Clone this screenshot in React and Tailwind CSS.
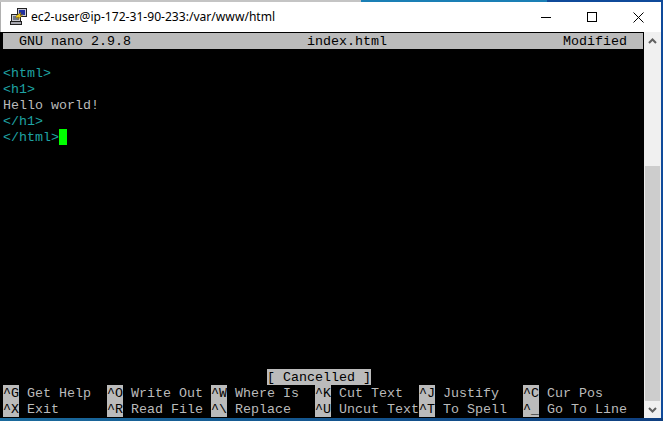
const rows = [
  [["^G", "Get Help"], ["^O", "Write Out"], ["^W", "Where Is"], ["^K", "Cut Text"], ["^J", "Justify"], ["^C", "Cur Pos"]],
  [["^X", "Exit"], ["^R", "Read File"], ["^\\", "Replace"], ["^U", "Uncut Text"], ["^T", "To Spell"], ["^_", "Go To Line"]],
];

const lines = [
  { text: "", color: "" },
  { text: "<html>", color: "text-[#1fa3a3]" },
  { text: "<h1>", color: "text-[#1fa3a3]" },
  { text: "Hello world!", color: "text-[#bbbbbb]" },
  { text: "</h1>", color: "text-[#1fa3a3]" },
  { text: "</html>", color: "text-[#1fa3a3]" },
];

function PuttyIcon() {
  return (
    <svg width="20" height="20" viewBox="0 0 20 20" className="shrink-0">
      {/* back monitor */}
      <rect x="9.5" y="1.5" width="9" height="8" fill="#c8c8d8" stroke="#222" />
      <rect x="11" y="3" width="6" height="5" fill="#2030a0" />
      {/* front monitor */}
      <rect x="3.5" y="7.5" width="9" height="7" fill="#c8c8d0" stroke="#222" />
      <rect x="5" y="9" width="6" height="4" fill="#707888" />
      <rect x="2.5" y="14.5" width="11" height="3" fill="#a8a8b0" stroke="#222" />
      {/* bolt */}
      <path d="M8 9 L13 5.5 L12 8.5 L15 7.5 L10 12.5 L11 10 L8 11 Z" fill="#f5d020" stroke="#7a5a00" strokeWidth="0.5" />
    </svg>
  );
}

function Shortcut({ shortcut, label, width }) {
  return (
    <div className={`flex ${width}`}>
      <span className="bg-[#bbbbbb] text-[#000000] whitespace-pre">{shortcut}</span>
      <span className="text-[#bbbbbb] whitespace-pre"> {label}</span>
    </div>
  );
}

export default function App() {
  const widths = ["w-[104px]", "w-[104px]", "w-[104px]", "w-[104px]", "w-[104px]", "w-[120px]"];

  return (
    <div className="w-[663px] h-[421px] flex flex-col overflow-hidden bg-white">
      <div className="h-[2px] flex">
        <div className="w-[361px] bg-[#c4c4c4]"></div>
        <div className="w-[186px] bg-[#1a7fb5]"></div>
        <div className="flex-1 bg-[#0f4a9a]"></div>
      </div>

      <div className="flex-1 flex min-h-0">
        <div className="w-[661px] flex flex-col">
          <div className="h-[30px] flex items-center bg-white pl-[7px] border-l border-[#b0b0b0]">
            <PuttyIcon />
            <span className="ml-[3px] text-[12.1px] text-black font-['Noto_Sans','Open_Sans',sans-serif]">ec2-user@ip-172-31-90-233:/var/www/html</span>
            <div className="ml-auto flex items-center text-black">
              <div className="w-[46px] h-[30px] flex items-center justify-center">
                <div className="w-[10px] h-px bg-black"></div>
              </div>
              <div className="w-[46px] h-[30px] flex items-center justify-center">
                <div className="w-[10px] h-[10px] border border-black"></div>
              </div>
              <div className="w-[46px] h-[30px] flex items-center justify-center">
                <svg width="11" height="11" viewBox="0 0 11 11">
                  <path d="M0.5 0.5 L10.5 10.5 M10.5 0.5 L0.5 10.5" stroke="#000" strokeWidth="1" fill="none" />
                </svg>
              </div>
            </div>
          </div>

          <div className="flex-1 flex min-h-0">
            <div className="w-[644px] bg-black pl-[3px] pt-px font-['Liberation_Mono',monospace] text-[13.33px] leading-[18px]">
              <div className="w-[640px] h-4 flex bg-[#bbbbbb] text-[#000000] whitespace-pre">
                <span className="w-[304px]">  GNU nano 2.9.8</span>
                <span className="w-[216px]">index.html</span>
                <span className="flex-1 text-right">Modified  </span>
              </div>
              <div className="h-[320px]">
                {lines.map((line, i) => (
                  <div key={i} className={`h-4 flex whitespace-pre ${line.color}`}>
                    {line.text}
                    {i === 5 && <span className="w-2 h-4 bg-[#00ff00]"></span>}
                  </div>
                ))}
              </div>
              <div className="h-4 flex pl-[264px]">
                <span className="bg-[#bbbbbb] text-[#000000] whitespace-pre">[ Cancelled ]</span>
              </div>
              {rows.map((row, i) => (
                <div key={i} className="h-4 flex">
                  {row.map((item, j) => (
                    <Shortcut key={item[0]} shortcut={item[0]} label={item[1]} width={widths[j]} />
                  ))}
                </div>
              ))}
            </div>

            <div className="w-[17px] bg-[#f0f0f0] flex flex-col">
              <div className="h-[17px] flex items-center justify-center">
                <svg width="9" height="6" viewBox="0 0 9 6"><path d="M1 5 L4.5 1.5 L8 5" stroke="#606060" strokeWidth="2" fill="none" /></svg>
              </div>
              <div className="flex-1 flex flex-col">
                <div className="h-[117px]"></div>
                <div className="flex-1 mx-px bg-[#cdcdcd]"></div>
              </div>
              <div className="h-[17px] flex items-center justify-center">
                <svg width="9" height="6" viewBox="0 0 9 6"><path d="M1 1 L4.5 4.5 L8 1" stroke="#606060" strokeWidth="2" fill="none" /></svg>
              </div>
            </div>
          </div>
        </div>
        <div className="flex-1 bg-[#0f4a9a]"></div>
      </div>

      <div className="h-[3px] bg-gradient-to-r from-[#1a6a9c] to-[#0f3f80]"></div>
    </div>
  );
}
